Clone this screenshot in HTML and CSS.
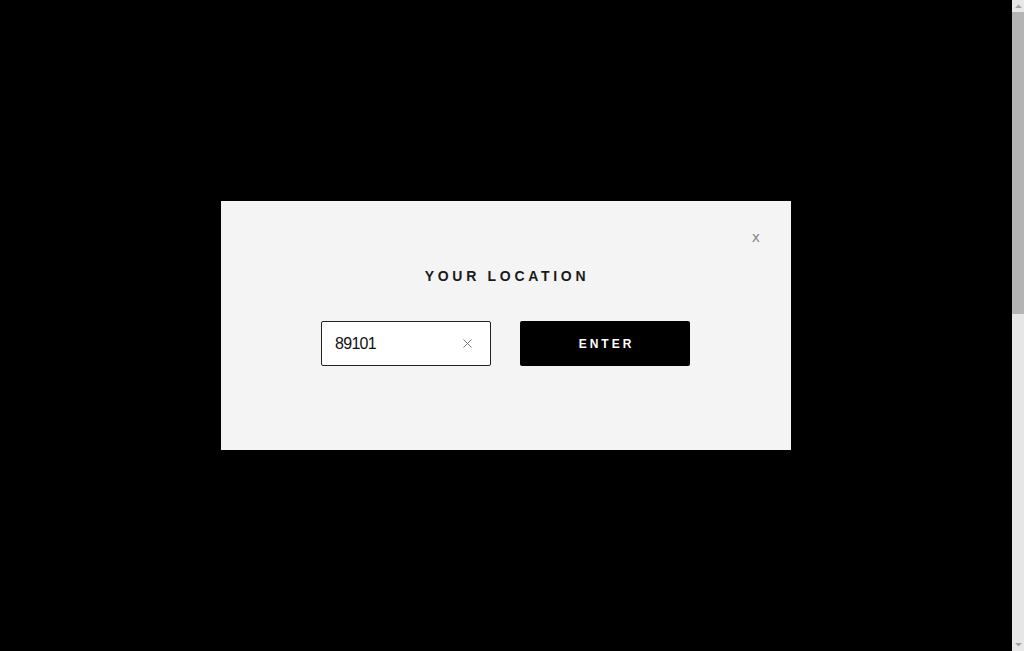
FILE: index.html
```html
<!DOCTYPE html>
<html lang="en">
<head>
<meta charset="utf-8">
<title>Your Location</title>
<link rel="stylesheet" href="styles.css">
</head>
<body>
<div class="viewport">
  <main class="stage">
    <div class="modal">
      <button class="close" type="button">x</button>
      <h2 class="title">YOUR LOCATION</h2>
      <form class="row">
        <div class="field">
          <input class="zip" type="text" value="89101">
          <span class="clear">
            <svg width="9" height="9" viewBox="0 0 9 9"><path d="M0.5 0.5L8.5 8.5M8.5 0.5L0.5 8.5" stroke="#777" stroke-width="1" fill="none"/></svg>
          </span>
        </div>
        <button class="enter" type="button">ENTER</button>
      </form>
    </div>
  </main>
  <div class="scrollbar">
    <div class="sb-btn">
      <svg width="7" height="4" viewBox="0 0 7 4"><path d="M0 4L3.5 0.5L7 4Z" fill="#a3a3a3"/></svg>
    </div>
    <div class="sb-thumb"></div>
    <div class="sb-track"></div>
    <div class="sb-btn">
      <svg width="7" height="4" viewBox="0 0 7 4"><path d="M0 0L3.5 3.5L7 0Z" fill="#a3a3a3"/></svg>
    </div>
  </div>
</div>
</body>
</html>
```
FILE: styles.css
```css
html, body {
  margin: 0;
  padding: 0;
  background: #000;
  overflow: hidden;
}
body {
  font-family: "Liberation Sans", Arial, sans-serif;
}
.viewport {
  display: flex;
  height: 651px;
}
.stage {
  flex: 1;
  display: flex;
  align-items: center;
  justify-content: center;
}
.scrollbar {
  width: 12px;
  display: flex;
  flex-direction: column;
  background: #e6e6e6;
}
.sb-btn {
  height: 12px;
  display: flex;
  align-items: center;
  justify-content: center;
  background: #e8e8e8;
}
.sb-thumb {
  height: 302px;
  background: #b4b4b4;
}
.sb-track {
  flex: 1;
}
.modal {
  position: relative;
  width: 570px;
  height: 249px;
  box-sizing: border-box;
  background: #f4f4f4;
  padding-top: 65px;
  display: flex;
  flex-direction: column;
  align-items: center;
}
.close {
  position: absolute;
  top: 26px;
  right: 31px;
  border: 0;
  background: none;
  padding: 0;
  font-family: "DejaVu Sans", sans-serif;
  font-size: 14px;
  line-height: 20px;
  color: #8a8a8a;
  cursor: pointer;
}
.title {
  margin: 0 0 35px 2px;
  font-size: 14px;
  line-height: 20px;
  font-weight: bold;
  letter-spacing: 3.7px;
  color: #1a1a1a;
}
.row {
  display: flex;
  gap: 29px;
  margin: 0 1px 0 0;
}
.field {
  position: relative;
  width: 170px;
  height: 45px;
  box-sizing: border-box;
  border: 1px solid #222;
  border-radius: 2px;
  background: #fff;
  display: flex;
  align-items: center;
}
.zip {
  border: 0;
  outline: none;
  background: transparent;
  width: 120px;
  padding: 0 0 0 13px;
  font-family: "Liberation Sans", Arial, sans-serif;
  font-size: 16px;
  letter-spacing: -0.7px;
  color: #111;
}
.clear {
  position: absolute;
  right: 18px;
  top: 17px;
  width: 9px;
  height: 9px;
  display: flex;
}
.enter {
  width: 170px;
  height: 45px;
  border: 0;
  border-radius: 2px;
  background: #000;
  color: #fff;
  font-family: "Liberation Sans", Arial, sans-serif;
  font-size: 12px;
  font-weight: bold;
  letter-spacing: 3px;
  padding: 0 0 0 3px;
  cursor: pointer;
}
```
